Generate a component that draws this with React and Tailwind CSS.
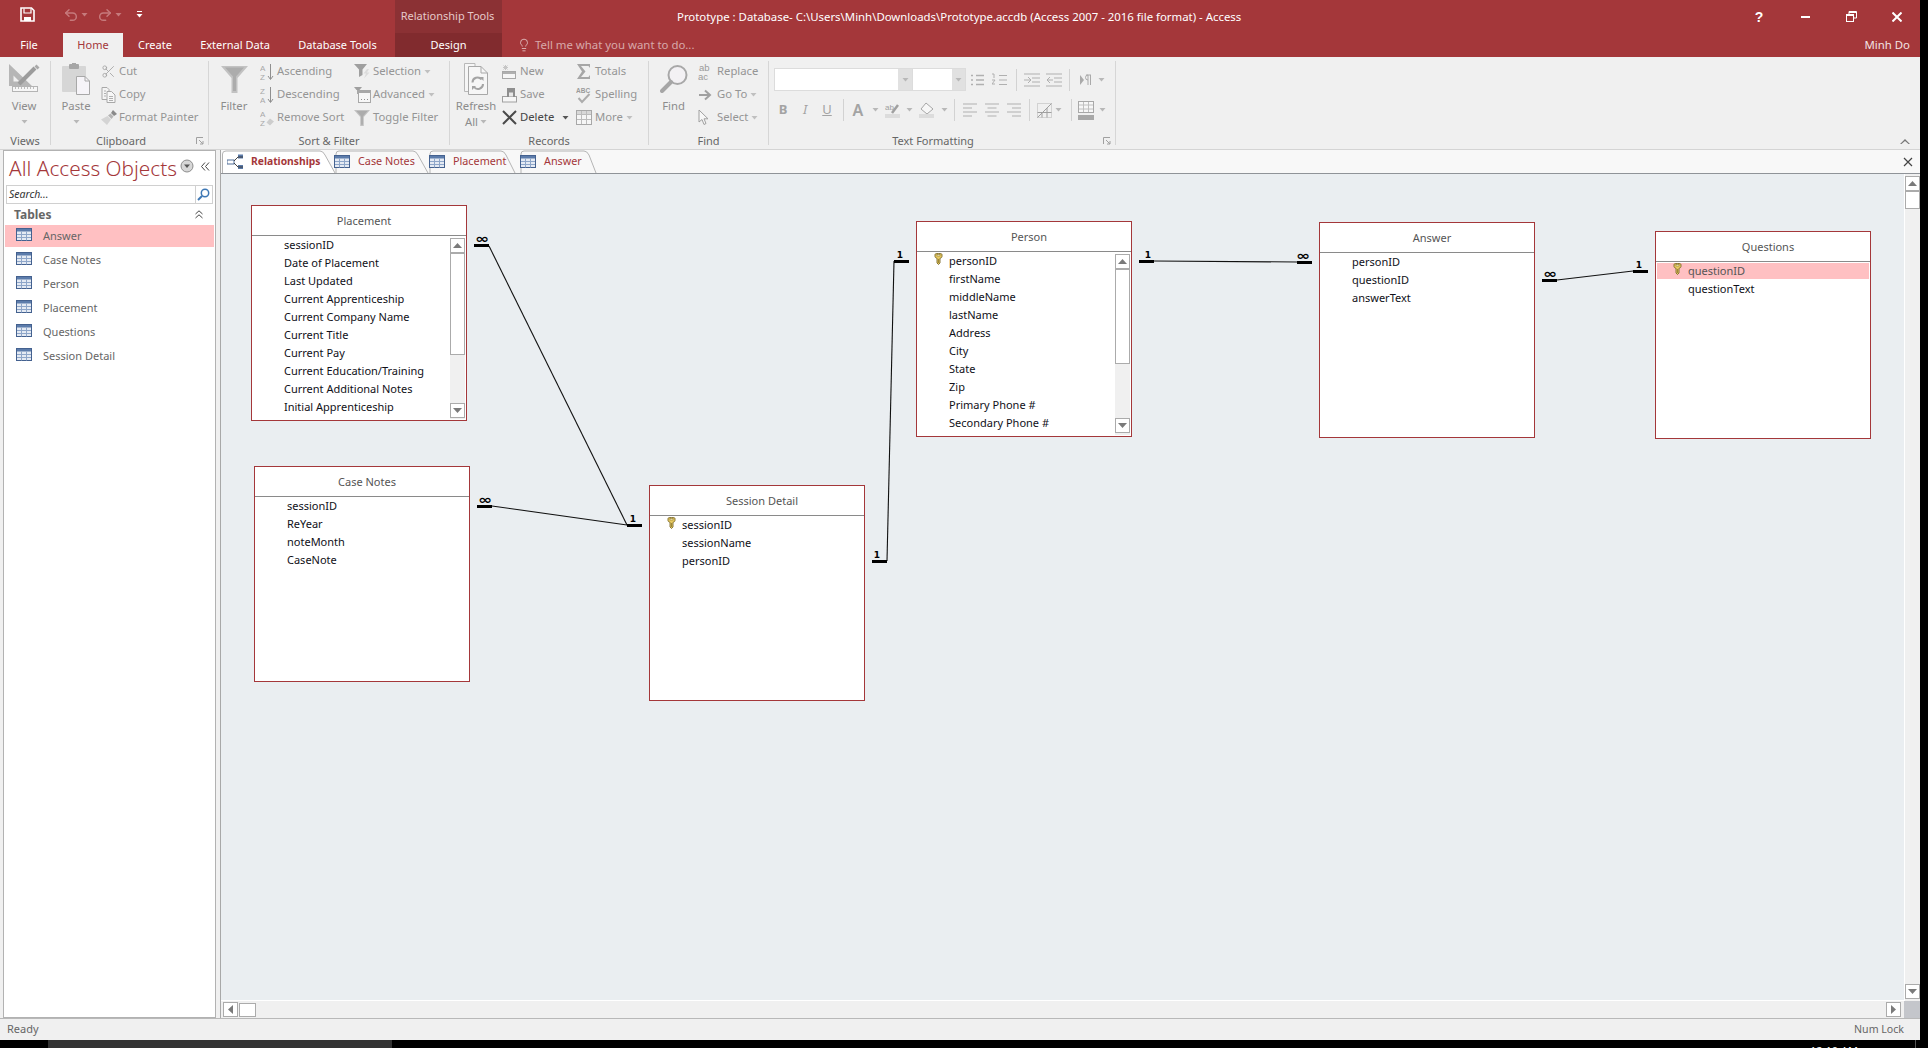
import React from "react";
import { Scissors, Undo2, Redo2, Lightbulb } from "lucide-react";

const TableIcon = ({ className = "" }) => (
  <svg width="16" height="13" viewBox="0 0 16 13" className={className}>
    <rect x="0.5" y="0.5" width="15" height="12" fill="#e4eaf3" stroke="#44618f" />
    <rect x="1" y="1" width="14" height="2.5" fill="#5c7cab" />
    <path d="M5.5 3.5V12.5M10.5 3.5V12.5M1 6.5H15M1 9.5H15" stroke="#8ea6c9" strokeWidth="1" />
  </svg>
);

const KeyIcon = () => (
  <svg width="9" height="12" viewBox="0 0 9 12">
    <path d="M1 1.5C1 .8 2 .5 4.5 .5S8 .8 8 1.5V3.5C8 4.5 7 5 6 5.3V10L4.5 11.5 3 10V5.3C2 5 1 4.5 1 3.5Z" fill="#e8cb62" stroke="#7c6a2a" strokeWidth="0.9" />
    <rect x="3" y="1.6" width="3" height="1.4" fill="#fff6c8" stroke="#7c6a2a" strokeWidth="0.5" />
    <path d="M4.5 6V10" stroke="#7c6a2a" strokeWidth="0.7" />
  </svg>
);

const Caret = ({ color = "#b8b8b8" }) => (
  <svg width="7" height="4" viewBox="0 0 7 4" className="shrink-0"><path d="M0.5 0H6.5L3.5 3.5Z" fill={color} /></svg>
);

const IconView = () => (
  <svg width="32" height="32" viewBox="0 0 32 32">
    <path d="M1 1V23H24ZM5.5 12.5V18.5H11.5Z" fill="#b6b6b6" fillRule="evenodd" />
    <path d="M11 21L27 5" stroke="#9c9c9c" strokeWidth="4" />
    <path d="M28.5 1.5L31.5 4.5 29.5 6.5 26.5 3.5Z" fill="#a8a8a8" />
    <rect x="4.5" y="23.5" width="25" height="5" fill="#f6f6f6" stroke="#b4b4b4" />
    <path d="M7.5 24V26M10.5 24V26M13.5 24V26M16.5 24V26M19.5 24V26M22.5 24V26M25.5 24V26" stroke="#bcbcbc" />
  </svg>
);
const IconPaste = () => (
  <svg width="30" height="32" viewBox="0 0 30 32">
    <rect x="1" y="3" width="24" height="26" rx="1" fill="#d6d6d6" />
    <rect x="8" y="1" width="10" height="5" rx="1" fill="#a6a6a6" />
    <rect x="11" y="0" width="4" height="3" fill="#a6a6a6" />
    <path d="M15.5 13.5H24L28.5 18V31.5H15.5Z" fill="#f6f4f8" stroke="#a8a8a8" />
    <path d="M24 13.5V18H28.5" fill="none" stroke="#a8a8a8" />
  </svg>
);
const IconCopy = () => (
  <svg width="15" height="16" viewBox="0 0 15 16">
    <path d="M1 .5H6L8 2.5V12.5H1Z" fill="#f4f4f4" stroke="#a8a8a8" />
    <path d="M6 4.5H10.5L14 8V15.5H6Z" fill="#f7f7f7" stroke="#a8a8a8" />
    <path d="M3 4H5M3 6.5H5M3 9H5M8 9.5H12M8 11.5H12M8 13.5H12" stroke="#b0b0b0" />
  </svg>
);
const IconBrush = () => (
  <svg width="16" height="15" viewBox="0 0 16 15">
    <path d="M12 0L16 4 13 6 10 3Z" fill="#8a8a8a" />
    <path d="M9.5 3.5L12.5 6.5 10.5 9 7 5.5Z" fill="#b5b5b5" />
    <path d="M6.5 6L10 9.5 6 15 0 9.5Z" fill="#d4d4d4" />
  </svg>
);
const IconFilter = ({ w = 27, h = 27 }) => (
  <svg width={w} height={h} viewBox="0 0 27 27">
    <path d="M0 0H27L16.5 12V27H10.5V12Z" fill="#c2c2c2" />
    <path d="M4 1.5H23L15 10.5V25H12V10.5Z" fill="#acacac" />
  </svg>
);
const IconSort = ({ top, bot }) => (
  <svg width="15" height="18" viewBox="0 0 15 18">
    <text x="0" y="8" fontSize="8" fill="#a8a8a8" fontFamily="Liberation Sans, sans-serif">{top}</text>
    <text x="0" y="16.5" fontSize="8" fill="#a8a8a8" fontFamily="Liberation Sans, sans-serif">{bot}</text>
    <path d="M10.5 1V16M8 13L10.5 16.5 13 13" fill="none" stroke="#8f8f8f" strokeWidth="1" />
  </svg>
);
const IconRemoveSort = () => (
  <svg width="15" height="18" viewBox="0 0 15 18">
    <text x="0" y="8" fontSize="8" fill="#a8a8a8" fontFamily="Liberation Sans, sans-serif">A</text>
    <text x="0" y="16.5" fontSize="8" fill="#a8a8a8" fontFamily="Liberation Sans, sans-serif">Z</text>
    <path d="M10 9.5L14 12.5 10 16.5 6.5 13.5Z" fill="#cdcdcd" />
  </svg>
);
const IconSelection = () => (
  <svg width="17" height="15" viewBox="0 0 17 15">
    <path d="M0 0H13L8.5 5.5V11L5 13V5.5Z" fill="#9f9f9f" />
    <path d="M13 5L9.5 9.5H12L10 14.5 15.5 8.5H13L15 5Z" fill="#dcdcdc" />
  </svg>
);
const IconAdvanced = () => (
  <svg width="17" height="16" viewBox="0 0 17 16">
    <path d="M0 0H8L5.5 3H2.5Z" fill="#9f9f9f" />
    <path d="M3 3H5V7H3Z" fill="#a8a8a8" />
    <rect x="4.5" y="3.5" width="12" height="12" fill="#f7f7f7" stroke="#a8a8a8" />
    <path d="M5 5H16" stroke="#a8a8a8" strokeWidth="2" />
    <path d="M7 12.5H8M10 12.5H11M13 12.5H14" stroke="#8f8f8f" />
  </svg>
);
const IconRefresh = () => (
  <svg width="26" height="32" viewBox="0 0 26 32">
    <path d="M1.5 .5H12V28.5H1.5Z" fill="#f6f6f6" stroke="#b8b8b8" />
    <path d="M5.5 3.5H18L24.5 10V31.5H5.5Z" fill="#f6f6f6" stroke="#a8a8a8" />
    <path d="M18 3.5V10H24.5" fill="none" stroke="#a8a8a8" />
    <path d="M9.5 19.5A5 5 0 0 1 18.5 16.5M20 21A5 5 0 0 1 11 24" fill="none" stroke="#a4a4a4" strokeWidth="2" />
    <path d="M16.5 14H20.5V18ZM9 27V23H13Z" fill="#a4a4a4" />
  </svg>
);
const IconNew = () => (
  <svg width="15" height="16" viewBox="0 0 15 16">
    <rect x="0.5" y="7.5" width="13" height="7" fill="#f6f6f6" stroke="#a8a8a8" />
    <rect x="1" y="8" width="12" height="2" fill="#b0b0b0" />
    <path d="M3.5 1V6M1 3.5H6M1.5 1.5L5.5 5.5M5.5 1.5L1.5 5.5" stroke="#c6c6c6" />
  </svg>
);
const IconSaveRec = () => (
  <svg width="15" height="16" viewBox="0 0 15 16">
    <rect x="0.5" y="9.5" width="14" height="5.5" fill="#f6f6f6" stroke="#a0a0a0" />
    <rect x="5" y="1" width="8" height="9" fill="#8f8f8f" />
    <rect x="7" y="5.5" width="4" height="4" fill="#e8e8e8" />
  </svg>
);
const IconDelete = () => (
  <svg width="15" height="15" viewBox="0 0 15 15"><path d="M1 1L14 14M14 1L1 14" stroke="#4a4a4a" strokeWidth="2" /></svg>
);
const IconSigma = () => (
  <svg width="15" height="17" viewBox="0 0 15 17"><path d="M1 1H14V5L12.5 3H5L9.5 8.5 5 14H12.5L14 12V16H1L6 8.5Z" fill="#a6a6a6" /></svg>
);
const IconSpell = () => (
  <svg width="15" height="18" viewBox="0 0 15 18">
    <text x="0" y="7" fontSize="6.5" fontWeight="700" fill="#9a9a9a" fontFamily="Liberation Sans, sans-serif">ABC</text>
    <path d="M2.5 12L6 16 13.5 8" fill="none" stroke="#acacac" strokeWidth="2" />
  </svg>
);
const IconGridSm = () => (
  <svg width="16" height="15" viewBox="0 0 16 15">
    <rect x="0.5" y="0.5" width="15" height="14" fill="#f6f6f6" stroke="#a8a8a8" />
    <rect x="1" y="1" width="14" height="3" fill="#d8d8d8" />
    <path d="M5.5 1V14M10.5 1V14M1 4.5H15M1 9.5H15" stroke="#bcbcbc" />
  </svg>
);
const IconMagnifier = () => (
  <svg width="28" height="28" viewBox="0 0 28 28">
    <circle cx="17.5" cy="10" r="9" fill="#f3f1f4" stroke="#a8a8a8" strokeWidth="2" />
    <path d="M11 17L2 26" stroke="#a6a6a6" strokeWidth="4" strokeLinecap="round" />
  </svg>
);
const IconReplace = () => (
  <svg width="16" height="18" viewBox="0 0 16 18">
    <text x="1" y="8" fontSize="9.5" fill="#9a9a9a" fontFamily="Liberation Sans, sans-serif">ab</text>
    <text x="0" y="17" fontSize="9.5" fill="#9a9a9a" fontFamily="Liberation Sans, sans-serif">ac</text>
  </svg>
);
const IconGoTo = () => (
  <svg width="14" height="12" viewBox="0 0 14 12"><path d="M1 6H11M7 1.5L12 6 7 10.5" fill="none" stroke="#a0a0a0" strokeWidth="2" /></svg>
);
const IconSelect = () => (
  <svg width="11" height="17" viewBox="0 0 11 17"><path d="M1 1V13L4 10.5 6 15.5 8 14.5 6 9.8H10Z" fill="#f7f7f7" stroke="#a0a0a0" /></svg>
);
const IconRel = () => (
  <svg width="16" height="16" viewBox="0 0 16 16">
    <rect x="0" y="6" width="7" height="4" fill="#fff" stroke="#3f5f8f" strokeWidth="0.9" />
    <rect x="11" y="0.5" width="5" height="4" fill="#5c7cab" />
    <rect x="11" y="11" width="5" height="4" fill="#5c7cab" />
    <path d="M7 7L11 3H16M7 9L11 13H16" fill="none" stroke="#333" strokeWidth="0.9" />
  </svg>
);
const Launcher = ({ className = "" }) => (
  <svg width="8" height="8" viewBox="0 0 8 8" className={className}>
    <path d="M.5 7V.5H7" fill="none" stroke="#a0a0a0" />
    <path d="M3 3L7 7M7 4V7H4" fill="none" stroke="#a0a0a0" />
  </svg>
);
const Ic = ({ d, sw = 1, color = "#b0b0b0", w = 16, h = 14 }) => (
  <svg width={w} height={h} viewBox={`0 0 ${w} ${h}`} className="shrink-0"><path d={d} fill="none" stroke={color} strokeWidth={sw} /></svg>
);

const Arrow = ({ dir, color = "#7a7a7a" }) => {
  const d = { up: "M0 5L4.5 0 9 5Z", down: "M0 0H9L4.5 5Z", left: "M5 0V9L0 4.5Z", right: "M0 0V9L5 4.5Z" }[dir];
  const horiz = dir === "left" || dir === "right";
  return (
    <svg width={horiz ? 5 : 9} height={horiz ? 9 : 5} viewBox={horiz ? "0 0 5 9" : "0 0 9 5"}>
      <path d={d} fill={color} />
    </svg>
  );
};
const SBtn = ({ dir, className = "" }) => (
  <div className={`w-[15px] h-[15px] bg-white border border-[#ababab] flex items-center justify-center shrink-0 ${className}`}>
    <Arrow dir={dir} />
  </div>
);

const Big = ({ icon, label, second, w, caret, className = "" }) => (
  <div className={`flex flex-col items-center shrink-0 pt-[2px] ${w} ${className}`}>
    <div className="h-[32px] flex items-center justify-center">{icon}</div>
    <div className="mt-[3px] h-[16px] leading-[16px] text-[#8c8c8c]">{label}</div>
    {second ? (
      <div className="h-[16px] flex items-center gap-[2px] text-[#8c8c8c]">{second}<Caret /></div>
    ) : caret ? (
      <div className="h-[16px] flex items-center"><Caret /></div>
    ) : null}
  </div>
);
const Small = ({ icon, label, iw, caret, dark, extra }) => (
  <div className={`h-[23px] flex items-center ${dark ? "text-[#444]" : "text-[#959595]"}`}>
    <div className={`${iw} flex items-center justify-start shrink-0`}>{icon}</div>
    <span className="whitespace-nowrap">{label}</span>
    {caret && <span className="ml-[3px]"><Caret color={dark ? "#555" : "#c0c0c0"} /></span>}
    {extra}
  </div>
);
const Group = ({ w, label, labelPad = "", launcher, children }) => (
  <div className={`relative shrink-0 flex flex-col h-[84px] border-r border-[#d6d6d6] ${w}`}>
    <div className="flex h-[69px] shrink-0">{children}</div>
    <div className={`mt-auto h-[8px] flex items-center justify-center text-[#666] text-[11px] ${labelPad}`}>{label}</div>
    {launcher && <Launcher className="absolute right-[4px] bottom-0" />}
  </div>
);
const Sep = ({ className = "" }) => <div className={`w-px h-[22px] bg-[#d2d2d2] shrink-0 ${className}`} />;
const Cell = ({ w, className = "", children }) => (
  <div className={`${w} flex items-center justify-center shrink-0 text-[#a3a3a3] ${className}`}>{children}</div>
);

const Ribbon = () => (
  <div className="relative h-[93px] shrink-0 bg-[#f0f0f0] border-b border-[#d4d4d4] pt-[4px] flex text-[11.3px]">
    <Group w="w-[51px]" label="Views">
      <Big w="w-[48px]" icon={<IconView />} label="View" caret />
    </Group>
    <Group w="w-[158px]" label="Clipboard" labelPad="pr-[17px]" launcher>
      <Big w="w-[50px]" icon={<IconPaste />} label="Paste" caret />
      <div className="flex flex-col -mt-[1px]">
        <Small iw="w-[18px]" icon={<Scissors size={15} color="#a0a0a0" strokeWidth={1.3} />} label="Cut" />
        <Small iw="w-[18px]" icon={<IconCopy />} label="Copy" />
        <Small iw="w-[18px]" icon={<IconBrush />} label="Format Painter" />
      </div>
    </Group>
    <Group w="w-[241px]" label="Sort & Filter">
      <Big w="w-[50px]" icon={<IconFilter />} label="Filter" />
      <div className="flex flex-col w-[94px] pl-[1px] -mt-[1px]">
        <Small iw="w-[17px]" icon={<IconSort top="A" bot="Z" />} label="Ascending" />
        <Small iw="w-[17px]" icon={<IconSort top="Z" bot="A" />} label="Descending" />
        <Small iw="w-[17px]" icon={<IconRemoveSort />} label="Remove Sort" />
      </div>
      <div className="flex flex-col pl-[1px] -mt-[1px]">
        <Small iw="w-[19px]" icon={<IconSelection />} label="Selection" caret />
        <Small iw="w-[19px]" icon={<IconAdvanced />} label="Advanced" caret />
        <Small iw="w-[19px]" icon={<IconFilter w={16} h={16} />} label="Toggle Filter" />
      </div>
    </Group>
    <Group w="w-[199px]" label="Records">
      <Big w="w-[52px]" icon={<IconRefresh />} label="Refresh" second="All" />
      <div className="flex flex-col w-[74px] -mt-[1px]">
        <Small iw="w-[18px]" icon={<IconNew />} label="New" />
        <Small iw="w-[18px]" icon={<IconSaveRec />} label="Save" />
        <Small iw="w-[18px]" icon={<IconDelete />} label="Delete" dark extra={<span className="ml-[8px]"><Caret color="#555" /></span>} />
      </div>
      <div className="flex flex-col -mt-[1px]">
        <Small iw="w-[19px]" icon={<IconSigma />} label="Totals" />
        <Small iw="w-[19px]" icon={<IconSpell />} label="Spelling" />
        <Small iw="w-[19px]" icon={<IconGridSm />} label="More" caret />
      </div>
    </Group>
    <Group w="w-[120px]" label="Find">
      <Big w="w-[49px]" icon={<IconMagnifier />} label="Find" />
      <div className="flex flex-col -mt-[1px]">
        <Small iw="w-[19px]" icon={<IconReplace />} label="Replace" />
        <Small iw="w-[19px]" icon={<IconGoTo />} label="Go To" caret />
        <Small iw="w-[19px]" icon={<IconSelect />} label="Select" caret />
      </div>
    </Group>
    <Group w="w-[347px]" label="Text Formatting" labelPad="pr-[18px]" launcher>
      <div className="flex flex-col pl-[5px] pt-[7px] gap-[7px]">
        <div className="flex items-center h-[23px]">
          <div className="w-[139px] h-[23px] bg-white border border-[#dcdcdc] flex justify-end">
            <div className="w-[14px] bg-[#e1e1e1] flex items-center justify-center"><Caret /></div>
          </div>
          <div className="w-[53px] h-[23px] bg-white border border-[#dcdcdc] border-l-0 flex justify-end">
            <div className="w-[13px] bg-[#e1e1e1] flex items-center justify-center"><Caret /></div>
          </div>
          <div className="flex items-center ml-[5px] gap-[8px]">
            <Ic d="M0 2.5H2M0 7H2M0 11.5H2M5 2.5H13M5 7H13M5 11.5H13" sw={1.4} w={13} />
            <Ic d="M0 1H2V5M0 7H3L0 11H3M7 2.5H15M7 7H15M7 11.5H15" w={15} />
          </div>
          <Sep className="ml-[9px]" />
          <div className="flex items-center ml-[7px] gap-[6px]">
            <Ic d="M0 1H16M8 5H16M8 9H16M0 13H16M0 7H6M4 4L7 7 4 10" />
            <Ic d="M0 1H16M8 5H16M8 9H16M0 13H16M7 7H1M4 4L1 7 4 10" />
          </div>
          <Sep className="ml-[7px]" />
          <svg width="12" height="12" viewBox="0 0 12 12" className="ml-[10px]"><path d="M0 1V11L4 6Z" fill="#aaa" /><path d="M6 1H11M8 1V11M10.5 1V11M8 6A2.5 2.5 0 0 1 8 1" fill="none" stroke="#aaa" /></svg>
          <span className="ml-[6px]"><Caret /></span>
        </div>
        <div className="flex items-center h-[24px]">
          <Cell w="w-[18px]" className="font-bold text-[13px]">B</Cell>
          <Cell w="w-[26px]" className="italic text-[13px]">I</Cell>
          <Cell w="w-[18px]" className="underline text-[13px]">U</Cell>
          <Sep className="ml-[7px]" />
          <Cell w="w-[28px]" className="text-[16px] font-semibold">A</Cell>
          <Caret />
          <Cell w="w-[27px]">
            <svg width="16" height="16" viewBox="0 0 16 16">
              <text x="0" y="8" fontSize="8" fill="#a0a0a0" fontFamily="Liberation Sans, sans-serif">ab</text>
              <path d="M7 11L13 3" stroke="#a0a0a0" strokeWidth="2.5" />
              <rect x="0" y="12" width="15" height="4" fill="#dcdcdc" />
            </svg>
          </Cell>
          <Caret />
          <Cell w="w-[28px]">
            <svg width="16" height="16" viewBox="0 0 16 16">
              <path d="M7 1L14 7 8 12 2 7Z" fill="#f7f7f7" stroke="#a6a6a6" />
              <rect x="0" y="12" width="15" height="4" fill="#dcdcdc" />
            </svg>
          </Cell>
          <Caret />
          <Sep className="ml-[6px]" />
          <div className="flex items-center ml-[8px] gap-[8px]">
            <Ic d="M0 1H14M0 5H9M0 9H14M0 13H9" w={14} />
            <Ic d="M0 1H14M2.5 5H11.5M0 9H14M2.5 13H11.5" w={14} />
            <Ic d="M0 1H14M5 5H14M0 9H14M5 13H14" w={14} />
          </div>
          <Sep className="ml-[8px]" />
          <svg width="15" height="15" viewBox="0 0 15 15" className="ml-[7px] shrink-0">
            <path d="M.5 .5H14.5V14.5H.5Z" fill="none" stroke="#b5b5b5" strokeDasharray="1 1" />
            <path d="M.5 14.5L14.5 .5M.5 9.5H14.5M5 9.5V14.5M10 5V14.5" fill="none" stroke="#a0a0a0" />
          </svg>
          <span className="ml-[3px]"><Caret /></span>
          <Sep className="ml-[9px]" />
          <svg width="16" height="19" viewBox="0 0 16 19" className="ml-[6px] shrink-0">
            <rect x="0.5" y="0.5" width="15" height="11" fill="#f7f7f7" stroke="#a8a8a8" />
            <path d="M1 4H15M1 8H15M5.5 1V11M10.5 1V11" stroke="#c0c0c0" />
            <rect x="0" y="14" width="16" height="5" fill="#a8a8a8" />
          </svg>
          <span className="ml-[5px]"><Caret /></span>
        </div>
      </div>
    </Group>
    <svg width="10" height="7" viewBox="0 0 10 7" className="absolute left-[1900px] top-[81px]">
      <path d="M0 6L5 1 10 6 8.5 6 5 3 1.5 6Z" fill="#777" />
    </svg>
  </div>
);

const TitleBar = () => (
  <div className="h-[57px] shrink-0 flex bg-[#a4373a] text-white text-[11.4px]">
    <div className="w-[395px] shrink-0 flex flex-col">
      <div className="h-[33px] flex items-center pb-[4px] pl-[20px]">
        <svg width="15" height="15" viewBox="0 0 15 15" className="shrink-0">
          <path d="M1 1H11.5L14 3.5V14H1Z" fill="none" stroke="#fff" strokeWidth="1.6" />
          <path d="M4 1.5V6H11V1.5" fill="none" stroke="#fff" strokeWidth="1.2" />
          <rect x="4" y="10" width="7" height="4" fill="#fff" />
        </svg>
        <span className="ml-[28px] flex items-center"><Undo2 size={16} color="#c67a7c" strokeWidth={2.2} /></span>
        <span className="ml-[2px]"><Caret color="#c67a7c" /></span>
        <span className="ml-[9px]"><Redo2 size={16} color="#c67a7c" strokeWidth={2.2} /></span>
        <span className="ml-[2px]"><Caret color="#c67a7c" /></span>
        <svg width="7" height="7" viewBox="0 0 7 7" className="ml-[14px]"><path d="M1 .5H6" stroke="#fff" /><path d="M0.5 3H6.5L3.5 6.5Z" fill="#fff" /></svg>
      </div>
      <div className="h-[24px] flex text-[11px]">
        <div className="w-[63px] flex items-center justify-center pr-[5px]">File</div>
        <div className="w-[60px] flex items-center justify-center bg-[#f0f0f0] text-[#a4373a]">Home</div>
        <div className="w-[64px] flex items-center justify-center">Create</div>
        <div className="w-[96px] flex items-center justify-center">External Data</div>
        <div className="w-[112px] flex items-center justify-center pr-[3px]">Database Tools</div>
      </div>
    </div>
    <div className="w-[107px] shrink-0 flex flex-col">
      <div className="h-[33px] flex items-center justify-center pr-[2px] bg-[#8b3134] text-[#e6c9ca] text-[11px]">Relationship Tools</div>
      <div className="h-[24px] flex items-center justify-center bg-[#812b2e] text-[11px]">Design</div>
    </div>
    <div className="flex-1 flex flex-col">
      <div className="h-[33px] flex items-center">
        <div className="ml-[175px] whitespace-nowrap">Prototype : Database- C:\Users\Minh\Downloads\Prototype.accdb (Access 2007 - 2016 file format) - Access</div>
        <div className="ml-auto flex">
          <div className="w-[46px] flex justify-center font-bold text-[14px] leading-none font-['Liberation_Sans',sans-serif]">?</div>
          <div className="w-[46px] flex items-center justify-center"><div className="w-[9px] h-[2px] bg-white" /></div>
          <div className="w-[46px] flex items-center justify-center">
            <svg width="11" height="11" viewBox="0 0 11 11"><path d="M3 3V.5H10.5V7H8" fill="none" stroke="#fff" /><path d="M3 1.5H10" stroke="#fff" /><rect x=".5" y="3.5" width="7" height="7" fill="none" stroke="#fff" /><path d="M1 4.5H7" stroke="#fff" /></svg>
          </div>
          <div className="w-[46px] flex items-center justify-center">
            <svg width="10" height="10" viewBox="0 0 10 10"><path d="M.5 .5L9.5 9.5M9.5 .5L.5 9.5" stroke="#fff" strokeWidth="2" /></svg>
          </div>
        </div>
      </div>
      <div className="h-[24px] flex items-center">
        <span className="ml-[15px] flex"><Lightbulb size={14} color="#e6c9ca" strokeWidth={1.4} /></span>
        <span className="ml-[4px] text-[#d8a9aa]">Tell me what you want to do...</span>
        <span className="ml-auto mr-[10px] text-[#f3e3e3]">Minh Do</span>
      </div>
    </div>
  </div>
);

const NavRow = ({ label, active }) => (
  <div className={`h-[22px] mb-[2px] flex items-center pl-[11px] ${active ? "bg-[#ffc0c2]" : ""}`}>
    <TableIcon className="-mt-[3px]" />
    <span className="ml-[11px] text-[#666]">{label}</span>
  </div>
);

const Nav = () => (
  <div className="flex shrink-0 w-[221px] bg-[#f0f0f0] text-[11px]">
    <div className="ml-[3px] w-[213px] h-full bg-white border border-[#b2b2b2] flex flex-col">
      <div className="h-[34px] shrink-0 flex items-center pl-[5px] relative">
        <span className="text-[20.8px] leading-none text-[#a4373a] font-light whitespace-nowrap">All Access Objects</span>
        <svg width="14" height="14" viewBox="0 0 14 14" className="absolute left-[176px] top-[8px]">
          <circle cx="7" cy="7" r="6" fill="#d7d7d7" stroke="#8d8d8d" />
          <path d="M4 5.5H10L7 9Z" fill="#555" />
        </svg>
        <svg width="9" height="9" viewBox="0 0 9 9" className="absolute left-[197px] top-[11px]">
          <path d="M4 .5L.5 4.5 4 8.5M8 .5L4.5 4.5 8 8.5" fill="none" stroke="#444" />
        </svg>
      </div>
      <div className="mx-[2px] h-[19px] shrink-0 border border-[#d0d0d0] flex items-center justify-between">
        <span className="pl-[2px] italic text-[#333] text-[10.5px]">Search...</span>
        <div className="w-[17px] h-full border-l border-[#d0d0d0] flex items-center justify-center pr-[1px]">
          <svg width="13" height="13" viewBox="0 0 13 13"><circle cx="8" cy="5" r="3.7" fill="none" stroke="#3e78b5" strokeWidth="1.5" /><path d="M5 8L1 12" stroke="#3e78b5" strokeWidth="2" /></svg>
        </div>
      </div>
      <div className="h-[21px] shrink-0 flex items-center justify-between pl-[10px] pr-[12px]">
        <span className="font-bold text-[12px] text-[#666]">Tables</span>
        <svg width="8" height="9" viewBox="0 0 8 9"><path d="M.5 4L4 .8 7.5 4M.5 8L4 4.8 7.5 8" fill="none" stroke="#444" /></svg>
      </div>
      <div className="flex flex-col mx-[1px]">
        <NavRow label="Answer" active />
        <NavRow label="Case Notes" />
        <NavRow label="Person" />
        <NavRow label="Placement" />
        <NavRow label="Questions" />
        <NavRow label="Session Detail" />
      </div>
    </div>
    <div className="w-[4px] bg-[#f0f0f0]" />
    <div className="w-px bg-[#a8a8a8]" />
  </div>
);

const TableBox = ({ title, pos, h = "h-[216px]", rows, keyRow, selected, textPad = "pl-[32px]", scroll, thumb, lower }) => (
  <div className={`absolute ${pos} ${h} w-[216px] bg-white border border-[#a4373a] flex flex-col text-[11px]`}>
    <div className="h-[30px] shrink-0 border-b border-[#8a8a8a] flex items-center justify-center pl-[10px] pt-[2px] text-[#555]">{title}</div>
    <div className="flex flex-col">
      {rows.map((r, i) => (
        <div key={r} className={`relative h-[18px] flex items-center ${textPad} whitespace-nowrap ${selected === i ? "text-[#555]" : "text-[#101018]"}`}>
          {selected === i && <div className="absolute left-[1px] right-[1px] top-[1px] h-[16px] bg-[#ffc0c2]" />}
          {keyRow === i && <div className="absolute left-[17px] top-[1px]"><KeyIcon /></div>}
          <span className="relative">{r}</span>
        </div>
      ))}
    </div>
    {scroll && (
      <div className="absolute right-[1px] top-[32px] bottom-[1px] w-[15px] flex flex-col bg-[#f0f0f0]">
        <SBtn dir="up" />
        <div className={`${thumb} w-[15px] bg-white border border-[#ababab] shrink-0`} />
        <div className="flex-1" />
        <SBtn dir="down" className={lower} />
      </div>
    )}
  </div>
);

const Mark = ({ x, y, one }) =>
  one ? (
    <text x={x} y={y} textAnchor="middle" fontFamily="DejaVu Sans, sans-serif" fontWeight="700" fontSize="9" fill="#000">1</text>
  ) : (
    <text transform={`translate(${x} ${y}) scale(1 .72)`} textAnchor="middle" fontFamily="DejaVu Sans, sans-serif" fontWeight="700" fontSize="17" fill="#000">∞</text>
  );
const Rel = () => (
  <svg width="1683" height="827" viewBox="221 174 1683 827" className="absolute left-0 top-0 pointer-events-none">
    <g stroke="#111" strokeWidth="1.1" fill="none">
      <path d="M489 246L627 525" />
      <path d="M492 506L627 525" />
      <path d="M887 561L894 261" />
      <path d="M1154 261L1297 262" />
      <path d="M1557 280L1633 271" />
    </g>
    <g fill="#000">
      <rect x="474" y="244" width="15" height="3" />
      <rect x="477" y="505" width="15" height="3" />
      <rect x="627" y="524" width="15" height="3" />
      <rect x="872" y="560" width="15" height="3" />
      <rect x="894" y="260" width="15" height="3" />
      <rect x="1139" y="260" width="15" height="3" />
      <rect x="1297" y="261" width="15" height="3" />
      <rect x="1542" y="279" width="15" height="3" />
      <rect x="1633" y="270" width="15" height="3" />
    </g>
    <Mark x={482} y={243} />
    <Mark x={485} y={504} />
    <Mark x={633} y={522} one />
    <Mark x={877} y={558} one />
    <Mark x={900} y={258} one />
    <Mark x={1148} y={258} one />
    <Mark x={1303} y={260} />
    <Mark x={1550} y={278} />
    <Mark x={1639} y={268} one />
  </svg>
);

const DocTab = ({ w, ml, d, active, pad, icon, label }) => (
  <div className={`relative h-[23px] shrink-0 ${w} ${ml} ${active ? "z-10" : ""}`}>
    <svg width="120" height="23" viewBox="0 0 120 23" className="absolute left-0 top-0">
      <path d={d} fill={active ? "#ffffff" : "#f8f8f8"} stroke="#b4b4b4" />
    </svg>
    <div className={`relative h-full flex items-center text-[#a4373a] ${pad} ${active ? "font-bold text-[10.3px]" : "text-[10.8px]"}`}>
      {icon}
      <span className="ml-[8px] whitespace-nowrap">{label}</span>
    </div>
  </div>
);

const Canvas = () => (
  <div className="flex-1 flex flex-col min-w-0">
    <div className="relative h-[24px] shrink-0 bg-[#f8f8f8] border-b border-[#8f9398] flex pl-[1px]">
      <DocTab w="w-[114px]" ml="" active pad="pl-[5px]" icon={<IconRel />} label="Relationships" d="M.5 23V4Q.5 1 4 1H98Q101 1 103 5L113 23" />
      <DocTab w="w-[100px]" ml="-ml-[7px]" pad="pl-[5px]" icon={<TableIcon />} label="Case Notes" d="M7 23V4Q7 1 10 1H84Q87 1 89 5L99 23" />
      <DocTab w="w-[93px]" ml="-ml-[6px]" pad="pl-[6px]" icon={<TableIcon />} label="Placement" d="M7 23V4Q7 1 10 1H78Q81 1 83 5L92 23" />
      <DocTab w="w-[83px]" ml="-ml-[2px]" pad="pl-[6px]" icon={<TableIcon />} label="Answer" d="M7 23V4Q7 1 10 1H70Q73 1 75 5L82 23" />
      <svg width="10" height="10" viewBox="0 0 10 10" className="absolute right-[7px] top-[7px]"><path d="M1 1L9 9M9 1L1 9" stroke="#444" strokeWidth="1.2" /></svg>
    </div>
    <div className="flex-1 flex min-h-0">
      <div className="flex-1 relative bg-[#eaeef1] overflow-hidden border-b border-white">
        <TableBox title="Placement" pos="left-[30px] top-[31px]" rows={["sessionID", "Date of Placement", "Last Updated", "Current Apprenticeship", "Current Company Name", "Current Title", "Current Pay", "Current Education/Training", "Current Additional Notes", "Initial Apprenticeship"]} scroll thumb="h-[102px]" lower="mb-[1px]" />
        <TableBox title="Case Notes" pos="left-[33px] top-[292px]" rows={["sessionID", "ReYear", "noteMonth", "CaseNote"]} />
        <TableBox title="Session Detail" pos="left-[428px] top-[311px]" rows={["sessionID", "sessionName", "personID"]} keyRow={0} />
        <TableBox title="Person" pos="left-[695px] top-[47px]" rows={["personID", "firstName", "middleName", "lastName", "Address", "City", "State", "Zip", "Primary Phone #", "Secondary Phone #"]} keyRow={0} scroll thumb="h-[95px]" lower="mb-[2px]" />
        <TableBox title="Answer" pos="left-[1098px] top-[48px]" rows={["personID", "questionID", "answerText"]} />
        <TableBox title="Questions" pos="left-[1434px] top-[57px]" h="h-[208px]" rows={["questionID", "questionText"]} keyRow={0} selected={0} />
        <Rel />
      </div>
      <div className="w-[16px] shrink-0 bg-[#f0f0f0] flex flex-col pt-[2px] pb-[2px] border-l border-white">
        <SBtn dir="up" />
        <div className="w-[15px] h-[18px] bg-white border border-[#ababab]" />
        <div className="flex-1" />
        <SBtn dir="down" />
      </div>
    </div>
    <div className="h-[17px] shrink-0 flex bg-[#f0f0f0]">
      <div className="flex-1 flex items-center pl-[2px]">
        <SBtn dir="left" className="h-[14px]" />
        <div className="ml-[1px] w-[17px] h-[14px] bg-white border border-[#ababab]" />
        <div className="flex-1" />
        <SBtn dir="right" className="h-[14px] mr-[3px]" />
      </div>
      <div className="w-[16px] bg-[#c4c6cb]" />
    </div>
  </div>
);

export default function App() {
  return (
    <div className="w-[1928px] h-[1048px] bg-black overflow-hidden flex flex-col font-['Noto_Sans',sans-serif]">
      <div className="w-[1920px] h-[1040px] shrink-0 flex flex-col bg-[#f0f0f0]">
        <TitleBar />
        <Ribbon />
        <div className="flex-1 flex min-h-0">
          <Nav />
          <Canvas />
        </div>
        <div className="h-[22px] shrink-0 border-t border-[#b8b8b8] bg-[#f0f0f0] flex items-center justify-between pl-[7px] pr-[16px] text-[11px] text-[#666]">
          <span>Ready</span>
          <span className="text-[10.6px]">Num Lock</span>
        </div>
      </div>
      <div className="relative flex-1 flex overflow-hidden">
        <div className="ml-[48px] w-[344px] bg-[#333]" />
        <span className="ml-[1418px] mt-[5px] text-[11px] leading-none text-white whitespace-nowrap">12:10 AM</span>
        <div className="absolute left-[1915px] top-0 bottom-0 w-px bg-[#555]" />
      </div>
    </div>
  );
}
